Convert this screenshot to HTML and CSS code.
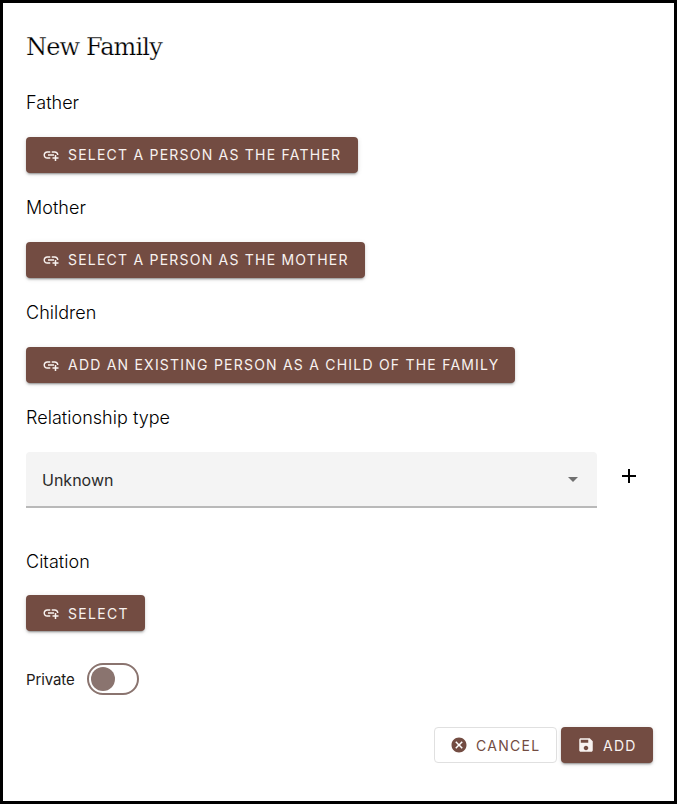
FILE: index.html
```html
<!DOCTYPE html>
<html lang="en">
<head>
<meta charset="utf-8">
<title>New Family</title>
<link rel="stylesheet" href="styles.css">
</head>
<body>
<svg width="0" height="0" class="defs">
  <symbol id="add-link" viewBox="0 0 24 24"><path d="M8 11h8v2H8v-2zm12.1 1H22c0-2.76-2.24-5-5-5h-4v1.9h4c1.71 0 3.1 1.39 3.1 3.1zM3.9 12c0-1.71 1.39-3.1 3.1-3.1h4V7H7c-2.76 0-5 2.24-5 5s2.24 5 5 5h4v-1.9H7c-1.71 0-3.1-1.39-3.1-3.1zM19 12h-2v3h-3v2h3v3h2v-3h3v-2h-3v-3z"/></symbol>
</svg>
<main class="page">
  <h2 class="title"><span>New Family</span></h2>

  <h4 class="label">Father</h4>
  <button class="button father"><svg class="icon"><use href="#add-link"/></svg><span>Select a person as the father</span></button>

  <h4 class="label">Mother</h4>
  <button class="button mother"><svg class="icon"><use href="#add-link"/></svg><span>Select a person as the mother</span></button>

  <h4 class="label">Children</h4>
  <button class="button children"><svg class="icon"><use href="#add-link"/></svg><span>Add an existing person as a child of the family</span></button>

  <h4 class="label">Relationship type</h4>
  <div class="select-row">
    <div class="select">
      <span>Unknown</span>
      <svg class="arrow" viewBox="0 0 10 5"><path d="M0 0h10L5 5z"/></svg>
    </div>
    <svg class="plus" viewBox="0 0 24 24"><path d="M19 13h-6v6h-2v-6H5v-2h6V5h2v6h6v2z"/></svg>
  </div>

  <h4 class="label citation">Citation</h4>
  <button class="button pick"><svg class="icon"><use href="#add-link"/></svg><span>Select</span></button>

  <div class="private">
    <span>Private</span>
    <span class="switch"><span class="handle"></span></span>
  </div>

  <div class="actions">
    <button class="button outlined"><svg class="icon" viewBox="0 0 24 24"><path d="M12 2C6.47 2 2 6.47 2 12s4.47 10 10 10 10-4.47 10-10S17.53 2 12 2zm5 13.59L15.59 17 12 13.41 8.41 17 7 15.59 10.59 12 7 8.41 8.41 7 12 10.59 15.59 7 17 8.41 13.41 12 17 15.59z"/></svg><span>Cancel</span></button>
    <button class="button add"><svg class="icon" viewBox="0 0 24 24"><path d="M17 3H5c-1.11 0-2 .9-2 2v14c0 1.1.89 2 2 2h14c1.1 0 2-.9 2-2V7l-4-4zm-5 16c-1.66 0-3-1.34-3-3s1.34-3 3-3 3 1.34 3 3-1.34 3-3 3zm3-10H5V5h10v4z"/></svg><span>Add</span></button>
  </div>
</main>
</body>
</html>
```
FILE: styles.css
```css
* { box-sizing: border-box; }
body {
  margin: 0;
  background: #fff;
  color: #000;
  font-family: Inter, "Liberation Sans", sans-serif;
}
.defs { display: none; }
.page {
  width: 677px;
  height: 804px;
  border: 3px solid #000;
  padding: 27px 21px 0 23px;
  overflow: hidden;
}
.title {
  margin: 0;
  height: 34px;
  font: 300 24px/34px "Roboto Slab", "DejaVu Serif", serif;
  letter-spacing: -0.85px;
  -webkit-text-stroke: 0.25px #fff;
  white-space: nowrap;
}
.label {
  margin: 25px 0 0;
  height: 28px;
  font-size: 18px;
  font-weight: 330;
  letter-spacing: 0.03px;
  line-height: 28px;
}
.button {
  display: flex;
  align-items: center;
  height: 36px;
  margin: 20px 0 0;
  padding: 0 16px;
  border: 0;
  border-radius: 4px;
  background: #734c42;
  color: #f8f2f0;
  box-shadow: 0 3px 1px -2px rgba(0,0,0,.2), 0 2px 2px rgba(0,0,0,.14), 0 1px 5px rgba(0,0,0,.12);
  font: 400 14px/36px Inter, "Liberation Sans", sans-serif;
  letter-spacing: 1.22px;
  text-transform: uppercase;
  white-space: nowrap;
}
.father { width: 332px; }
.mother { width: 339px; }
.children { width: 489px; }
.pick { width: 119px; margin-top: 19px; }
.pick, .actions .button { letter-spacing: 1.3px; }
.pick span, .actions span { padding-top: 1px; }
.icon {
  flex: none;
  width: 18px;
  height: 18px;
  margin-right: 8px;
  fill: currentColor;
}
.button + .label { margin-top: 21px; }
.select-row {
  display: flex;
  margin-top: 20px;
}
.select {
  display: flex;
  align-items: center;
  justify-content: space-between;
  width: 571px;
  height: 56px;
  padding: 2px 19px 0 16px;
  border-bottom: 2px solid #b9b9b9;
  border-radius: 4px 4px 0 0;
  background: #f4f4f4;
  color: #2b2b2b;
  font-size: 16px;
}
.arrow { width: 10px; height: 5px; margin-top: -2px; fill: #707070; }
.plus { width: 24px; height: 24px; margin: 12px 0 0 20px; }
.citation { margin-top: 40px; }
.private {
  display: flex;
  align-items: center;
  height: 32px;
  margin-top: 32px;
  color: #211a18;
  font-size: 15px;
  letter-spacing: -0.1px;
}
.private > span:first-child { width: 61px; }
.switch {
  width: 52px;
  height: 32px;
  padding: 2px;
  border: 2px solid #8a746f;
  border-radius: 16px;
}
.handle {
  display: block;
  width: 24px;
  height: 24px;
  border-radius: 50%;
  background: #8a746f;
}
.actions {
  display: flex;
  justify-content: flex-end;
  gap: 4px;
  margin-top: 32px;
}
.actions .button { margin: 0; }
.actions .outlined {
  width: 123px;
  border: 1px solid #e0e0e0;
  padding: 0 15px;
  background: #fff;
  color: #734c42;
  box-shadow: none;
}
.add { width: 92px; }
```
